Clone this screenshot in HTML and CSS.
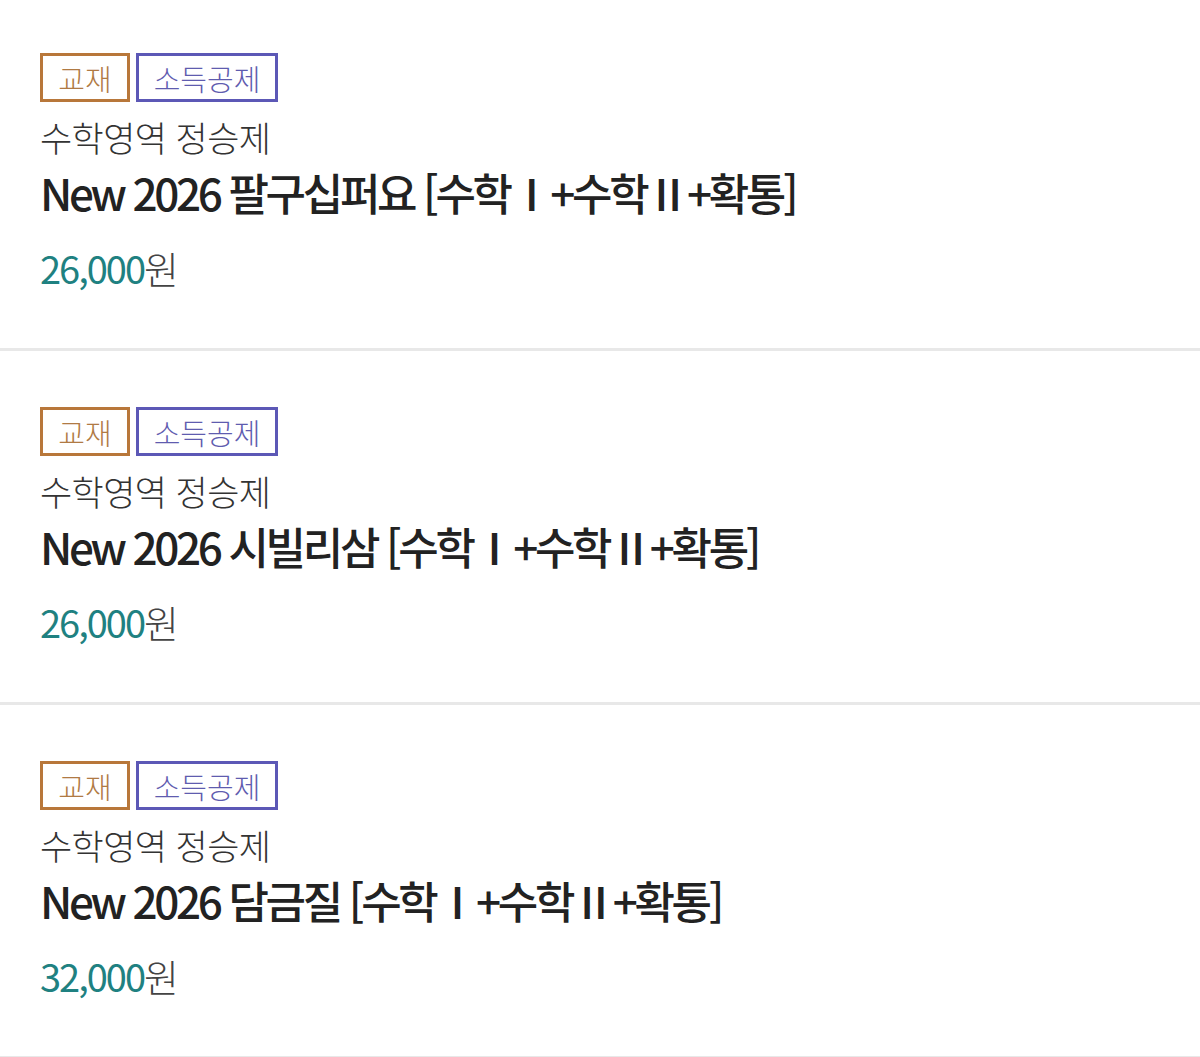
FILE: index.html
```html
<!DOCTYPE html>
<html lang="ko">
<head>
<meta charset="utf-8">
<title>교재 목록</title>
<link rel="stylesheet" href="styles.css">
</head>
<body>
<ul class="list">
  <li class="item">
    <div class="badges"><span class="badge badge-book">교재</span><span class="badge badge-tax">소득공제</span></div>
    <p class="author">수학영역 정승제</p>
    <p class="title">New 2026 팔구십퍼요 [수학Ⅰ+수학Ⅱ+확통]</p>
    <p class="price"><span class="num">26,000</span><span class="won">원</span></p>
  </li>
  <li class="item">
    <div class="badges"><span class="badge badge-book">교재</span><span class="badge badge-tax">소득공제</span></div>
    <p class="author">수학영역 정승제</p>
    <p class="title">New 2026 시빌리삼 [수학Ⅰ+수학Ⅱ+확통]</p>
    <p class="price"><span class="num">26,000</span><span class="won">원</span></p>
  </li>
  <li class="item">
    <div class="badges"><span class="badge badge-book">교재</span><span class="badge badge-tax">소득공제</span></div>
    <p class="author">수학영역 정승제</p>
    <p class="title">New 2026 담금질 [수학Ⅰ+수학Ⅱ+확통]</p>
    <p class="price"><span class="num">32,000</span><span class="won">원</span></p>
  </li>
</ul>
</body>
</html>
```

FILE: styles.css
```css
* { box-sizing: border-box; }
html, body { margin: 0; padding: 0; background: #fff; }
body {
  font-family: "Noto Sans CJK KR", "Noto Sans", sans-serif;
  color: #222;
}
.list { list-style: none; margin: 0; padding: 0; }
.item {
  height: 351px;
  margin-bottom: 3px;
  padding: 53px 40px 0;
  border-bottom: 3px solid #e8e8e8;
}
.badges { display: flex; gap: 6px; height: 49px; }
.badge {
  display: flex;
  align-items: center;
  justify-content: center;
  height: 49px;
  border: 3px solid;
  font-size: 29px;
  font-weight: 300;
  letter-spacing: 0;
}
.badge-book { width: 90px; border-color: #b8773a; color: #b07a44; }
.badge-tax { width: 142px; border-color: #5c58b6; color: #5f5caf; }
p { margin: 0; }
.author {
  margin-top: 10px;
  height: 50px;
  line-height: 50px;
  font-size: 35px;
  font-weight: 300;
  color: #333;
  letter-spacing: -0.6px;
}
.title {
  margin-top: 2px;
  height: 56px;
  line-height: 56px;
  font-size: 44px;
  font-weight: 500;
  color: #222;
  letter-spacing: -3.35px;
}
.price {
  margin-top: 23px;
  height: 50px;
  line-height: 50px;
  font-size: 38px;
  letter-spacing: -2px;
}
.num { color: #1f8181; font-weight: 400; }
.won { color: #444; font-weight: 300; }
```
